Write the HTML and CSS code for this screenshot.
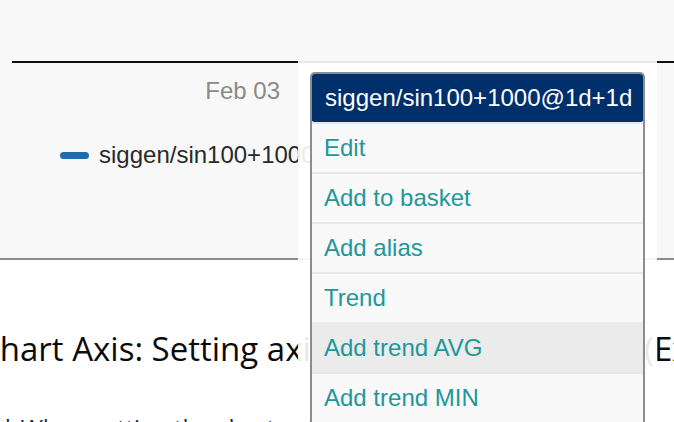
FILE: index.html
```html
<!DOCTYPE html>
<html>
<head>
<meta charset="utf-8">
<link rel="stylesheet" href="styles.css">
</head>
<body>
<div class="chart">
  <div class="axis">
    <div class="tick">Feb 03</div>
  </div>
  <div class="legend">
    <span class="swatch"></span>
    <span class="legend-label">siggen/sin100+1000@1d+1d</span>
  </div>
</div>
<div class="doc">
  <h2 class="title">Chart Axis: Setting ax<span class="tight">is minimum/maximum </span>(Example)</h2>
  <p class="note">** When setting the chart axis minimum and maximum values by hand, the</p>
</div>
<div class="popup">
  <div class="menu">
    <div class="menu-head">siggen/sin100+1000@1d+1d</div>
    <div class="menu-item">Edit</div>
    <div class="menu-item">Add to basket</div>
    <div class="menu-item">Add alias</div>
    <div class="menu-item">Trend</div>
    <div class="menu-item is-hover">Add trend AVG</div>
    <div class="menu-item">Add trend MIN</div>
    <div class="menu-item">Add trend MAX</div>
  </div>
</div>
</body>
</html>
```
FILE: styles.css
```css
html, body {
  margin: 0;
  padding: 0;
  background: #ffffff;
  overflow: hidden;
  height: 422px;
}
body {
  font-family: "Liberation Sans", Arial, sans-serif;
  position: relative;
}
.chart {
  height: 260px;
  box-sizing: border-box;
  padding-top: 61px;
  background: #f8f8f8;
  border-bottom: 2px solid #8c8c8c;
}
.axis {
  margin-left: 12px;
  border-top: 2px solid #111111;
}
.tick {
  width: 268px;
  margin-top: 14px;
  text-align: right;
  font-size: 24px;
  color: #8a8a8a;
}
.legend {
  display: flex;
  align-items: center;
  gap: 10px;
  margin-top: 36px;
  padding-left: 60px;
  white-space: nowrap;
}
.swatch {
  width: 29px;
  height: 7px;
  border-radius: 4px;
  background: #1f6cb0;
  flex: none;
}
.legend-label {
  font-size: 24px;
  color: #2a2a2a;
}
.doc {
  font-family: "Open Sans", "Noto Sans", sans-serif;
  white-space: nowrap;
}
.title {
  margin: 67px 0 0 -21px;
  font-size: 33px;
  font-weight: 400;
  color: #0b0b0b;
  line-height: 44px;
}
.tight {
  letter-spacing: -0.85px;
}
.note {
  margin: 40px 0 0 -12px;
  font-size: 24px;
  color: #1c2a4c;
  line-height: 33px;
}
.popup {
  position: absolute;
  left: 298px;
  top: 61px;
  width: 359px;
  height: 380px;
  box-sizing: border-box;
  padding: 11px 12px 0;
  background: rgba(255, 255, 255, 0.9);
}
.menu {
  border: 2px solid #8c8c8c;
  border-radius: 5px;
  background: #f9f9f9;
  overflow: hidden;
}
.menu-head {
  height: 49px;
  margin: -1px -1px 0;
  padding-left: 14px;
  display: flex;
  align-items: center;
  background: #00306c;
  color: #ffffff;
  font-size: 24px;
  border-radius: 4px;
}
.menu-item {
  height: 48px;
  display: flex;
  align-items: center;
  padding-left: 12px;
  border-top: 2px solid #e7e7e7;
  color: #21979b;
  font-size: 24px;
}
.menu-item.is-hover {
  background: #ebebeb;
  border-top-color: #ebebeb;
}
```
